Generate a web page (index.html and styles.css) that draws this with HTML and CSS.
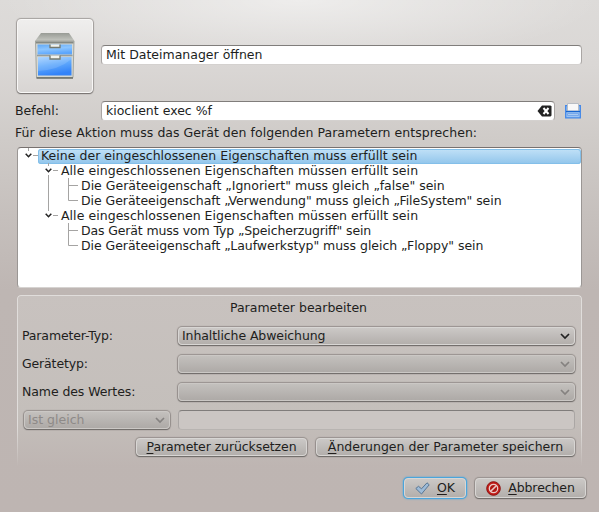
FILE: index.html
```html
<!DOCTYPE html>
<html lang="de">
<head>
<meta charset="utf-8">
<title>Geräte-Aktionen</title>
<link rel="stylesheet" href="styles.css">
</head>
<body>
<main class="dialog">
  <div class="row name-row">
    <button class="icon-button">
      <svg width="42" height="48" viewBox="0 0 42 48">
        <defs>
          <linearGradient id="top" x2="0" y2="1"><stop stop-color="#989b95"/><stop offset="1" stop-color="#c6c8c2"/></linearGradient>
          <linearGradient id="blue" x2=".3" y2="1"><stop stop-color="#62a9f4"/><stop offset=".5" stop-color="#8cc5ff"/><stop offset="1" stop-color="#5ba5fc"/></linearGradient>
          <linearGradient id="blue2" x2=".3" y2="1"><stop stop-color="#a4d0ff"/><stop offset=".5" stop-color="#60a9fc"/><stop offset="1" stop-color="#3383f8"/></linearGradient>
        </defs>
        <path d="M7 1H35L40.500 9H1Z" fill="url(#top)"/>
        <path d="M1.500 9H40L39 45.500H2.500Z" fill="#d6d8d2" stroke="#a2a59f" stroke-width="1"/>
        <path d="M2 10.500H39.500" stroke="#858983" stroke-width="2"/>
        <path d="M2.500 46H39" stroke="#696c66" stroke-width="1.3"/>
        <path d="M3.500 12.500H38V22.500H3.500Z" fill="url(#blue)"/>
        <path d="M4 25H37.500V43.500H4Z" fill="url(#blue2)"/>
        <path d="M4 39Q25 38 37.500 27V25H4Z" fill="#fff" opacity=".13"/>
        <path d="M3 23.500H38.500" stroke="#959d9e" stroke-width="1.5"/>
        <path d="M16 12.500V15.500H26V12.500M16 23.500V27H26V23.500" fill="#f1f2ec" stroke="#74796f" stroke-width="1.3"/>
      </svg>
    </button>
    <div class="field name-field"><span class="t-name">Mit Dateimanager öffnen</span></div>
  </div>
  <div class="row command-row">
    <label class="command-label">Befehl:</label>
    <div class="field command-field"><span class="t-cmd">kioclient exec %f</span>
      <svg class="clear" width="15" height="12" viewBox="0 0 15 12"><path d="M5 .5H13.500L14.500 1.500V10.500L13.500 11.500H5L.5 6Z" fill="#222"/><path d="M6.500 3L11.500 9M11.500 3L6.500 9" stroke="#fff" stroke-width="2"/></svg>
    </div>
    <svg class="open" width="16" height="16" viewBox="0 0 16 16"><path d="M.7 2.700H15.300V14.800H.7Z" fill="#9cc3f2" stroke="#4287e8" stroke-width="1.300"/><path d="M2.500 .5H13.500V8H2.500Z" fill="#f8f8f8" stroke="#b8bdc4"/><path d="M1 8.500H15" stroke="#1764ce" stroke-width="1.300"/><path d="M2.500 10.500H13.500V12.500H2.500Z" fill="#a9cbf3" stroke="#6ca0e8" stroke-width=".8"/></svg>
  </div>
  <p class="intro"><span>Für diese Aktion muss das Gerät den folgenden Parametern entsprechen:</span></p>
  <section class="tree">
    <svg class="branches" width="62" height="105" viewBox="0 0 62 105" fill="none">
      <path d="M10.500 0V3M15 7.500H20M30.500 15V18M35 22.500H40M30.500 27V63M35 67.500H40M50.500 30V52.500H60M50.500 37.500H60M50.500 75V97.500H60M50.500 82.500H60" stroke="#a5a4a3"/>
      <path d="M7.700 5.700L10.500 8.700L13.300 5.700M27.700 20.700L30.500 23.700L33.300 20.700M27.700 65.700L30.500 68.700L33.300 65.700" stroke="#222" stroke-width="1.500"/>
    </svg>
    <div class="node level0 selected"><span class="wide-s">Keine der eingeschlossenen Eigenschaften muss erfüllt sein</span></div>
    <div class="node level1"><span class="wide-m">Alle eingeschlossenen Eigenschaften müssen erfüllt sein</span></div>
    <div class="node level2"><span>Die Geräteeigenschaft „Ignoriert" muss gleich „false" sein</span></div>
    <div class="node level2"><span class="tight-s">Die Geräteeigenschaft „Verwendung" muss gleich „FileSystem" sein</span></div>
    <div class="node level1"><span class="wide-m">Alle eingeschlossenen Eigenschaften müssen erfüllt sein</span></div>
    <div class="node level2"><span class="tight-l">Das Gerät muss vom Typ „Speicherzugriff" sein</span></div>
    <div class="node level2"><span class="tight-s">Die Geräteeigenschaft „Laufwerkstyp" muss gleich „Floppy" sein</span></div>
  </section>
  <section class="group">
    <h2><span>Parameter bearbeiten</span></h2>
    <div class="param"><label class="tight-l">Parameter-Typ:</label><div class="combo"><span class="tight-m">Inhaltliche Abweichung</span><svg class="arrow" width="10" height="7" viewBox="0 0 10 7"><path d="M1 1L5 5L9 1"/></svg></div></div>
    <div class="param"><label class="tight-l">Gerätetyp:</label><div class="combo disabled"><span></span><svg class="arrow" width="10" height="7" viewBox="0 0 10 7"><path d="M1 1L5 5L9 1"/></svg></div></div>
    <div class="param"><label class="tight-m">Name des Wertes:</label><div class="combo disabled"><span></span><svg class="arrow" width="10" height="7" viewBox="0 0 10 7"><path d="M1 1L5 5L9 1"/></svg></div></div>
    <div class="param compare"><div class="combo disabled"><span>Ist gleich</span><svg class="arrow" width="10" height="7" viewBox="0 0 10 7"><path d="M1 1L5 5L9 1"/></svg></div><div class="field disabled-field"></div></div>
    <div class="actions"><button class="btn reset"><span class="tight-m"><u>P</u>arameter zurücksetzen</span></button><button class="btn save"><span><u>Ä</u>nderungen der Parameter speichern</span></button></div>
  </section>
  <footer class="footer">
    <button class="btn ok"><svg width="15" height="13" viewBox="0 0 15 13"><path d="M.8 6.500L3.500 4.300L6.500 6.800L12 .8L14.200 2.800L6.500 12Z" fill="#9dbbd8" stroke="#587693"/></svg><span><u>O</u>K</span></button>
    <button class="btn cancel"><svg width="15" height="15" viewBox="0 0 15 15"><circle cx="7.500" cy="7.500" r="6.800" fill="#c31b17" stroke="#8c1210"/><circle cx="7.500" cy="7.500" r="4.200" fill="#b11713" stroke="#eac9c6" stroke-width="1.300"/><path d="M4.700 10.300L10.300 4.700" stroke="#eac9c6" stroke-width="1.600"/></svg><span class="tight-m"><u>A</u>bbrechen</span></button>
  </footer>
</main>
</body>
</html>
```
FILE: styles.css
```css
* { box-sizing: border-box; }
body {
  margin: 0; width: 599px; height: 512px; overflow: hidden;
  font: 12.5px/15px "DejaVu Sans", sans-serif; color: #211e1d;
  background: radial-gradient(ellipse 300px 64px at 300px 0, rgba(255,255,255,.5), transparent), linear-gradient(#dddbd9, #dad7d5 64px, #cfcbc8 140px, #c5bfbc 220px, #beb6b3 290px, #beb5b2);
}
svg { display: block; flex: none; }
span, label { display: block; white-space: pre; line-height: 13px; margin-bottom: 2px; }
button { font: inherit; color: inherit; padding: 0; }
.wide-s { letter-spacing: .03px; }
.wide-m { letter-spacing: .05px; }
.tight-s { letter-spacing: -.045px; }
.tight-m { letter-spacing: -.09px; }
.tight-l { letter-spacing: -.14px; }
.intro span { letter-spacing: .035px; }
.dialog { display: flex; flex-direction: column; padding: 19px 17px 0; }
.row { display: flex; }
.name-row { height: 76px; gap: 7px; align-items: flex-start; }
.icon-button {
  width: 76px; height: 74px; display: flex; align-items: center; justify-content: center;
  border: 1px solid #f8f7f6; border-radius: 4px; background: linear-gradient(#efeeed, #d8d5d3);
  box-shadow: 0 1px 1px #777371, 0 0 1px 1px #a5a19f;
}
.icon-button svg { margin-right: 1px; }
.field {
  height: 20px; display: flex; align-items: center; padding: 0 4px; background: #fff;
  border: 1px solid #aaa6a4; border-top-color: #807d7b; border-bottom-color: #d4d1cf; border-radius: 4px;
}
.name-field { width: 481px; margin: 26px 0 0 1px; }
.command-row { height: 20px; margin-top: 6px; align-items: center; margin-left: -2px; }
.command-label { width: 86px; }
.command-field { width: 454px; justify-content: space-between; padding-right: 2px; }
.open { margin-left: 10px; }
.intro { margin: 5px 0 6px -2px; height: 15px; }
.tree {
  position: relative; height: 141px; padding-top: 1px; background: #fff;
  border: 1px solid #9a9694; border-top-color: #77716f; border-bottom-color: #d6d3d1; border-radius: 4px;
  margin-bottom: 7px;
}
.branches { position: absolute; left: 0; top: 0; }
.node { height: 15px; }
.level0 { margin-left: 20px; padding-left: 3px; }
.level1 { padding-left: 43px; }
.level2 { padding-left: 63px; }
.selected { background: linear-gradient(#c1e1f7, #91c5eb); border-radius: 3px; box-shadow: inset 0 0 0 1px #83bfe9; }
.group {
  position: relative; height: 172px; padding: 6px 7px 0 5px; border-radius: 4px 4px 0 0;
  background: linear-gradient(#c8c2bf, #c4bfbb 70%, #beb5b2);
}
.group::before {
  content: ""; position: absolute; inset: 0; border: 1px solid #e0dddb; border-bottom: 0;
  border-radius: 4px 4px 0 0; box-shadow: 0 0 1px 1px #aaa19e;
  -webkit-mask: linear-gradient(#000 75%, transparent); mask: linear-gradient(#000 75%, transparent);
  pointer-events: none;
}
h2 { font: inherit; text-align: center; margin: 0 0 10px; height: 15px; }
.param { display: flex; align-items: center; height: 20px; margin-bottom: 8px; }
.param label { width: 156px; }
.combo, .btn {
  height: 18px; border: 1px solid #d8d6d4; border-radius: 4px;
  background: linear-gradient(#cbc8c6, #b3afac); box-shadow: 0 1px 1px #6f6b69, 0 0 1px 1px #98928f;
}
.combo { flex: 1; display: flex; justify-content: space-between; align-items: center; padding: 0 4px 0 3px; }
.combo.disabled { color: #8e8a88; background: linear-gradient(#c3c0bd, #aeaaa7); border-color: #cbc8c5; }
.arrow { fill: none; stroke: #222; stroke-width: 1.7; }
.disabled .arrow { stroke: #858280; }
.compare .combo { flex: 0 0 146px; margin-left: 2px; }
.disabled-field { margin-left: 8px; flex: 1; background: #cbc6c3; border-bottom-color: #b8b4b1; }
.actions { display: flex; justify-content: flex-end; gap: 9px; }
.btn { display: flex; align-items: center; justify-content: center; }
u { text-underline-offset: 2px; }
.reset { width: 171px; }
.save { width: 259px; }
.footer { display: flex; justify-content: flex-end; gap: 9px; margin: 11px -4px 0 0; }
.ok { width: 62px; height: 20px; gap: 7px; box-shadow: 0 0 0 1px #4aa5dc, 0 0 2px 1px #4aa5dc; }
.cancel { width: 111px; height: 20px; gap: 7px; }
```
